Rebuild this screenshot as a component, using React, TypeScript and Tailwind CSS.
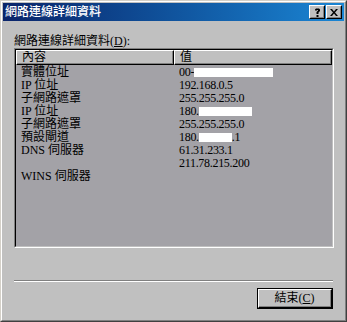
import React from "react";

const FONT = '"Liberation Serif", "Noto Sans CJK TC", serif';

type Row = { k: string; v: React.ReactNode };

const W = ({ w }: { w: number }) => (
  <span className="inline-block bg-white h-[9px] align-[-1px]" style={{ width: w }} />
);

const rows: Row[] = [
  { k: "實體位址", v: <>00-<W w={79} /></> },
  { k: "IP 位址", v: "192.168.0.5" },
  { k: "子網路遮罩", v: "255.255.255.0" },
  { k: "IP 位址", v: <>180.<W w={53} /></> },
  { k: "子網路遮罩", v: "255.255.255.0" },
  { k: "預設閘道", v: <>180.<W w={33} />.1</> },
  { k: "DNS 伺服器", v: "61.31.233.1" },
  { k: "", v: "211.78.215.200" },
  { k: "WINS 伺服器", v: "" },
];

const TitleBtn = ({ children }: { children: React.ReactNode }) => (
  <div className="w-[16px] h-[14px] bg-[#c0c0c0] border border-t-white border-l-white border-r-black border-b-black flex">
    <div className="flex-1 border border-t-[#c0c0c0] border-l-[#c0c0c0] border-r-[#808080] border-b-[#808080] flex items-center justify-center text-black">
      {children}
    </div>
  </div>
);

const HeaderCell = ({ label, className }: { label: string; className: string }) => (
  <div className={`h-[15px] bg-[#c0c0c0] border border-t-white border-l-white border-r-black border-b-black flex ${className}`}>
    <div className="flex-1 border-r border-b border-r-[#808080] border-b-[#808080] pl-[5px] text-[12px] leading-[13px] text-black">
      {label}
    </div>
  </div>
);

export default function App() {
  return (
    <div className="w-[347px] h-[322px]" style={{ fontFamily: FONT }}>
      <div className="w-full h-full bg-[#c0c0c0] border border-t-[#d4d0c8] border-l-[#d4d0c8] border-r-[#404040] border-b-[#404040]">
        <div className="w-full h-full border border-t-white border-l-white border-r-[#808080] border-b-[#808080] p-px flex flex-col">
          {/* Title bar */}
          <div className="h-[18px] bg-linear-to-r from-[#0a246a] to-[#1b86d4] flex items-center pl-[2px] pr-[2px]">
            <span className="text-white text-[12px] leading-none font-medium">網路連線詳細資料</span>
            <div className="ml-auto flex gap-[1px]">
              <TitleBtn>
                <svg width="7" height="9" viewBox="0 0 7 9">
                  <path d="M1 2.5V1.5L2 0.5h3l1 1v1.5L4.5 4.5V6H2.5V4L4 2.5V2H3v0.5z M2.5 7h2v2h-2z" fill="black" />
                </svg>
              </TitleBtn>
              <TitleBtn>
                <svg width="8" height="7" viewBox="0 0 8 7">
                  <path d="M0 0h2l2 2.5L6 0h2L5 3.5 8 7H6L4 4.5 2 7H0l3-3.5z" fill="black" />
                </svg>
              </TitleBtn>
            </div>
          </div>

          {/* Content */}
          <div className="flex-1 flex flex-col pl-[11px] pr-[10px] pt-[13px]">
            <div className="text-[12px] leading-[14px] text-black">
              網路連線詳細資料(<span className="underline">D</span>):
            </div>

            <div className="w-[320px] h-[200px] border border-t-[#808080] border-l-[#808080] border-r-white border-b-white">
              <div className="w-full h-full border border-t-black border-l-black border-r-[#c0c0c0] border-b-[#c0c0c0] bg-[#a3a2a7] flex flex-col">
                <div className="flex">
                  <HeaderCell label="內容" className="w-[158px]" />
                  <HeaderCell label="值" className="w-[158px]" />
                </div>
                <div className="flex flex-col pt-[1px] text-[12px] leading-[13px] text-black">
                  {rows.map((r, i) => (
                    <div key={i} className="flex h-[13px]">
                      <div className="w-[158px] pl-[5px] whitespace-nowrap">{r.k}</div>
                      <div className="w-[158px] pl-[5px] whitespace-nowrap tracking-[-0.3px]">{r.v}</div>
                    </div>
                  ))}
                </div>
              </div>
            </div>

            {/* Separator */}
            <div className="mt-[32px] w-[319px] h-[2px] border-t border-t-[#808080] border-b border-b-white" />

            {/* Button row */}
            <div className="mt-[6px] flex justify-end pr-[1px]">
              <div className="w-[76px] h-[21px] border border-black flex">
                <div className="flex-1 border border-t-white border-l-white border-r-black border-b-black flex">
                  <div className="flex-1 border-r border-b border-r-[#808080] border-b-[#808080] flex items-center justify-center text-[12px] leading-none text-black">
                    結束(<span className="underline">C</span>)
                  </div>
                </div>
              </div>
            </div>
          </div>
        </div>
      </div>
    </div>
  );
}
